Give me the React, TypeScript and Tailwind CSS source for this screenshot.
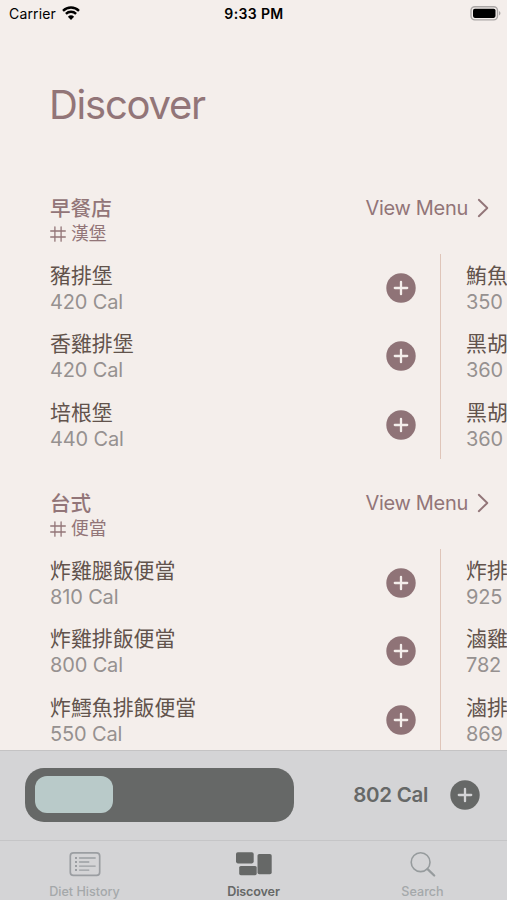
type Dish = { name: string; cal: string };
type Section = { title: string; tag: string; left: Dish[]; right: Dish[] };

const sections: Section[] = [
  {
    title: '早餐店',
    tag: '漢堡',
    left: [
      { name: '豬排堡', cal: '420 Cal' },
      { name: '香雞排堡', cal: '420 Cal' },
      { name: '培根堡', cal: '440 Cal' },
    ],
    right: [
      { name: '鮪魚', cal: '350' },
      { name: '黑胡', cal: '360' },
      { name: '黑胡', cal: '360' },
    ],
  },
  {
    title: '台式',
    tag: '便當',
    left: [
      { name: '炸雞腿飯便當', cal: '810 Cal' },
      { name: '炸雞排飯便當', cal: '800 Cal' },
      { name: '炸鱈魚排飯便當', cal: '550 Cal' },
    ],
    right: [
      { name: '炸排', cal: '925' },
      { name: '滷雞', cal: '782' },
      { name: '滷排', cal: '869' },
    ],
  },
];

function AddIcon({ fill, stroke }: { fill: string; stroke: string }) {
  return (
    <svg className="size-[30px] shrink-0" viewBox="0 0 30 30" fill="none">
      <circle cx="15" cy="15" r="14.7" fill={fill} />
      <path d="M15 8.8v12.4M8.8 15h12.4" stroke={stroke} strokeWidth="2.3" strokeLinecap="round" />
    </svg>
  );
}

function DishText({ name, cal }: Dish) {
  return (
    <div className="whitespace-nowrap pt-[2px]">
      <div className="h-[27px] text-[20.9px] leading-[27px] text-[#62534c]">{name}</div>
      <div className="h-[27px] text-[20px] leading-[27px] tracking-[-0.15px] text-[#969190]">{cal}</div>
    </div>
  );
}

function MenuSection({ title, tag, left, right }: Section) {
  return (
    <section className="mb-[30px] h-[265px] shrink-0">
      <div className="flex h-[60px] justify-between pl-[50px] pr-[18px] text-[#927578]">
        <div className="pt-px">
          <h2 className="h-[27px] text-[20.6px] font-medium leading-[27px]">{title}</h2>
          <div className="flex h-6 items-center gap-[5px] text-[17.8px] leading-6">
            <svg className="size-4" viewBox="0 0 16 16" fill="none" stroke="currentColor" strokeWidth="1.3" strokeLinecap="round">
              <path d="M4.9 .8v14.4M11.1 .8v14.4M.7 5h14.6M.7 11h14.6" />
            </svg>
            <span>{tag}</span>
          </div>
        </div>
        <div className="flex h-7 items-center gap-[9px] text-[20px] leading-7">
          <span className="tracking-[-0.3px]">View Menu</span>
          <svg className="h-5 w-3" viewBox="0 0 12 20" fill="none" stroke="currentColor" strokeWidth="1.9" strokeLinecap="round" strokeLinejoin="round">
            <path d="M1.8 1.8 10.3 10l-8.5 8.2" />
          </svg>
        </div>
      </div>
      <div className="flex h-[205px]">
        <div className="w-[441px] shrink-0 border-r border-[#dfc5b9] pl-[50px] pr-[24px]">
          {left.map((dish) => (
            <div key={dish.name} className="flex h-[68.3px] items-center justify-between">
              <DishText {...dish} />
              <AddIcon fill="#8f7377" stroke="#f4eeeb" />
            </div>
          ))}
        </div>
        <div className="shrink-0 pl-[25px]">
          {right.map((dish, i) => (
            <div key={i} className="flex h-[68.3px] items-center">
              <DishText {...dish} />
            </div>
          ))}
        </div>
      </div>
    </section>
  );
}

function StatusBar() {
  return (
    <header className="flex h-7 shrink-0 items-center justify-between pb-[2px] pl-[9px] pr-[6px] text-[14px] text-black">
      <div className="flex w-[160px] items-center gap-[6px]">
        <span className="tracking-[0.15px]">Carrier</span>
        <svg className="h-[14px] w-[18px]" viewBox="0 0 18 14" fill="none" stroke="black" strokeWidth="2.4">
          <path d="M1 4.8a11.5 11.5 0 0 1 16 0" />
          <path d="M3.9 7.9a7.3 7.3 0 0 1 10.2 0" />
          <path d="M9 14 5.9 10.8a4.5 4.5 0 0 1 6.2 0Z" fill="black" stroke="none" />
        </svg>
      </div>
      <span className="-ml-[2px] font-semibold tracking-[0.37px]">9:33 PM</span>
      <div className="flex w-[160px] justify-end">
        <svg className="h-[15px] w-[31px]" viewBox="0 0 31 15" fill="none">
          <rect x="1" y=".7" width="26.5" height="13.2" rx="3.8" stroke="#aaa6a5" strokeWidth="1.4" />
          <rect x="3" y="2.7" width="22.5" height="9.2" rx="1.8" fill="black" />
          <path d="M29 5.1c2 .9 2 3.5 0 4.4Z" fill="#aaa6a5" />
        </svg>
      </div>
    </header>
  );
}

function CalorieBar() {
  return (
    <div className="flex h-[90px] items-center border-t border-[#c4c3c4] pb-[2px] pl-[25px] pr-[27px]">
      <div className="flex h-[54px] w-[269px] items-center rounded-[19px] bg-[#666867] pl-[10px]">
        <div className="h-[37px] w-[78px] rounded-[12px] bg-[#b9cac9]" />
      </div>
      <div className="ml-auto flex items-center gap-[22px]">
        <span className="pt-[2px] text-[20.5px] font-semibold tracking-[-0.3px] text-[#666867]">802 Cal</span>
        <AddIcon fill="#666867" stroke="#d4d4d6" />
      </div>
    </div>
  );
}

function TabBar() {
  return (
    <nav className="grid h-[60px] grid-cols-3 border-t border-[#c5c5c7] text-[12.6px] font-medium leading-4 text-[#a4a8aa]">
      <div className="flex flex-col items-center pt-[10px]">
        <svg className="h-[26px] w-8" viewBox="0 0 32 26" fill="none" stroke="#9b9ea2">
          <rect x="1.3" y="1.8" width="29.4" height="22.6" rx="3.2" strokeWidth="1.7" />
          <path d="M10.5 7h15.7M10.5 11h9.3M10.5 15.1h15.7M10.5 19.1h9.3" strokeWidth="1.3" strokeLinecap="round" />
          <path d="M7 6v2M7 10v2M7 14.1v2M7 18.1v2" strokeWidth="2" />
        </svg>
        <span className="mt-[7px]">Diet History</span>
      </div>
      <div className="flex flex-col items-center pt-[10px] text-[#666867]">
        <svg className="h-[26px] w-9" viewBox="0 0 36 26" fill="currentColor">
          <rect x="0" y="1.2" width="17.7" height="11.2" rx="1.8" />
          <rect x="3.2" y="15" width="17.5" height="9.2" rx="1.6" />
          <rect x="21.5" y="3" width="14.2" height="20.3" rx="1.8" />
        </svg>
        <span className="mt-[7px] font-semibold tracking-[-0.15px]">Discover</span>
      </div>
      <div className="flex flex-col items-center pt-[10px]">
        <svg className="size-[26px]" viewBox="0 0 26 26" fill="none" stroke="#969b9d" strokeLinecap="round">
          <circle cx="10.6" cy="11.2" r="9.4" strokeWidth="1.6" />
          <path d="m17.6 18.1 6.6 6.4" strokeWidth="2.2" />
        </svg>
        <span className="mt-[7px]">Search</span>
      </div>
    </nav>
  );
}

export default function App() {
  return (
    <div className="flex h-[900px] w-[507px] flex-col overflow-hidden bg-[#f4eeeb] font-[Inter,'Noto_Sans_CJK_TC',sans-serif]">
      <StatusBar />
      <main className="flex min-h-0 flex-1 flex-col overflow-hidden">
        <h1 className="mb-[63px] mt-[51px] h-[52px] shrink-0 pl-[49px] text-[40px] leading-[52px] tracking-[-1.25px] text-[#927578]">
          Discover
        </h1>
        {sections.map((section) => (
          <MenuSection key={section.title} {...section} />
        ))}
      </main>
      <footer className="shrink-0 bg-[#d4d4d6]">
        <CalorieBar />
        <TabBar />
      </footer>
    </div>
  );
}
